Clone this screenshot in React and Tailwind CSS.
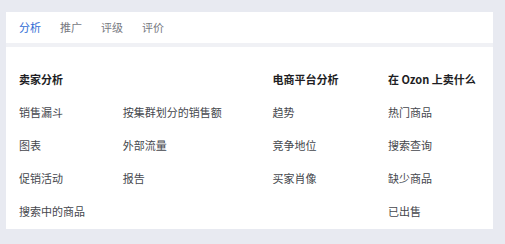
const columns = [
  {
    title: "卖家分析",
    width: "w-[106px]",
    items: ["销售漏斗", "图表", "促销活动", "搜索中的商品"],
  },
  {
    title: "",
    width: "w-[153px]",
    items: ["按集群划分的销售额", "外部流量", "报告"],
  },
  {
    title: "电商平台分析",
    width: "w-[118px]",
    items: ["趋势", "竞争地位", "买家肖像"],
  },
  {
    title: "在 Ozon 上卖什么",
    width: "w-[94px]",
    items: ["热门商品", "搜索查询", "缺少商品", "已出售"],
  },
];

const tabs = ["分析", "推广", "评级", "评价"];

function Column({ col }) {
  return (
    <div className={`${col.width} flex flex-col`}>
      <p className="h-4 leading-4 text-[11px] font-bold text-[#1e1e24]">{col.title}</p>
      <ul className="mt-[17px] flex flex-col gap-[17px]">
        {col.items.map((item) => (
          <li key={item} className="h-4 leading-4 text-[11px] text-[#45474d]">
            {item}
          </li>
        ))}
      </ul>
    </div>
  );
}

export default function App() {
  return (
    <div
      className="w-[505px] h-[244px] bg-[#e8eaf1] pt-3 pl-[6px]"
      style={{ fontFamily: '"Noto Sans CJK SC", "Noto Sans", sans-serif' }}
    >
      <div className="w-[487px] bg-white">
        <nav className="h-[31px] flex items-center gap-[19px] px-[13px] text-[11px]">
          {tabs.map((tab, i) => (
            <span key={tab} className={i === 0 ? "text-[#2f6cd5]" : "text-[#77797f]"}>
              {tab}
            </span>
          ))}
        </nav>
        <div className="h-[4px] bg-[#f0f1f5]" />
        <div className="h-[182px] flex px-[13px] pt-[24px]">
          {columns.map((col, i) => (
            <Column key={i} col={col} />
          ))}
        </div>
      </div>
    </div>
  );
}
